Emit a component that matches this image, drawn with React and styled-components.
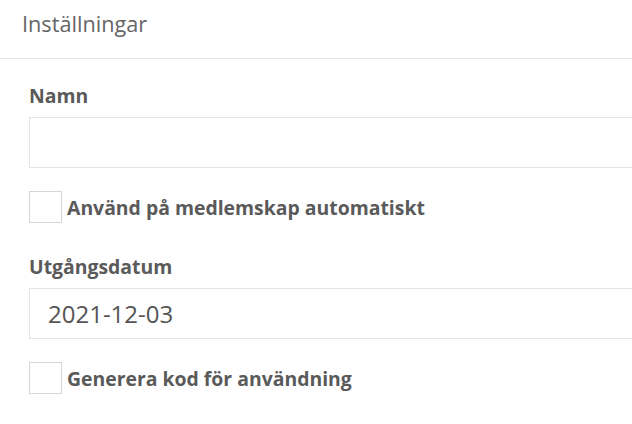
import styled, { createGlobalStyle } from "styled-components";

const GlobalStyle = createGlobalStyle`
  html, body {
    margin: 0;
    padding: 0;
    background: #fff;
    font-family: "Open Sans", "Liberation Sans", sans-serif;
  }
`;

const Panel = styled.div`
  width: 100%;
  background: #fff;
`;

const Header = styled.div`
  height: 59px;
  box-sizing: border-box;
  padding: 8px 0 0 22px;
  border-bottom: 1px solid #e6e6e6;
  color: #656565;
  font-size: 21.7px;
  line-height: 32px;
`;

const Body = styled.div`
  padding: 24px 0 0 29px;
`;

const Label = styled.div`
  color: #5a5a5a;
  font-size: 19.4px;
  font-weight: 700;
  line-height: 26px;
  margin-bottom: 8px;
`;

const Input = styled.div`
  box-sizing: border-box;
  height: 51px;
  border: 1px solid #e4e4e4;
  border-right: none;
  padding: 0 18px;
  display: flex;
  align-items: center;
  color: #555;
  font-size: 24px;
`;

const CheckRow = styled.label`
  display: flex;
  align-items: center;
  gap: 5px;
  margin: ${(p) => p.$top}px 0 ${(p) => p.$bottom}px;
  color: #5a5a5a;
  font-size: 19.4px;
  font-weight: 700;
`;

const Box = styled.span`
  box-sizing: border-box;
  width: 33px;
  height: 32px;
  border: 1px solid #d6d6d6;
  background: #fff;
`;

export default function App() {
  return (
    <>
      <GlobalStyle />
      <Panel>
        <Header>Inställningar</Header>
        <Body>
          <Label>Namn</Label>
          <Input />
          <CheckRow $top={23} $bottom={31}>
            <Box />
            Använd på medlemskap automatiskt
          </CheckRow>
          <Label>Utgångsdatum</Label>
          <Input>2021-12-03</Input>
          <CheckRow $top={23} $bottom={0}>
            <Box />
            Generera kod för användning
          </CheckRow>
        </Body>
      </Panel>
    </>
  );
}
